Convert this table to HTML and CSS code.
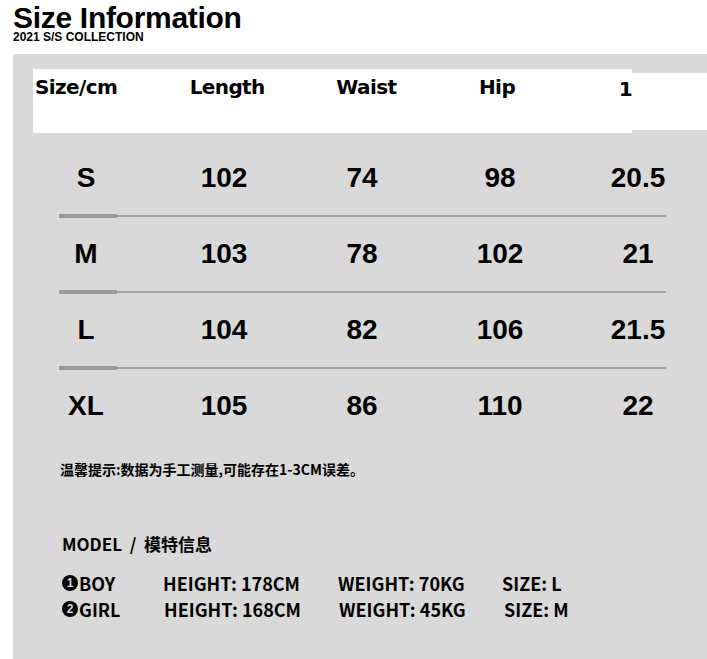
FILE: index.html
```
<!DOCTYPE html>
<html lang="zh-CN">
<head>
<meta charset="utf-8">
<title>Size Information</title>
<link rel="stylesheet" href="styles.css">
</head>
<body>
<header class="top">
  <h1 class="title">Size Information</h1>
  <div class="subtitle">2021 S/S COLLECTION</div>
</header>
<main class="panel">
  <div class="head-row">
    <div class="head-box">
      <span class="h h-size">Size/cm</span>
      <span class="h h-len">Length</span>
      <span class="h h-waist">Waist</span>
      <span class="h h-hip">Hip</span>
      <span class="h h-one">1</span>
    </div>
    <div class="head-ext"></div>
  </div>

  <div class="table">
    <div class="row"><span>S</span><span>102</span><span>74</span><span>98</span><span>20.5</span></div>
    <div class="divider"><i class="thick"></i><i class="thin"></i></div>
    <div class="row"><span>M</span><span>103</span><span>78</span><span>102</span><span>21</span></div>
    <div class="divider"><i class="thick"></i><i class="thin"></i></div>
    <div class="row"><span>L</span><span>104</span><span>82</span><span>106</span><span>21.5</span></div>
    <div class="divider"><i class="thick"></i><i class="thin"></i></div>
    <div class="row"><span>XL</span><span>105</span><span>86</span><span>110</span><span>22</span></div>
  </div>

  <p class="note">温馨提示:数据为手工测量,可能存在1-3CM误差。</p>

  <h2 class="model-title">MODEL&nbsp; / &nbsp;模特信息</h2>
  <div class="models">
    <div class="model"><span class="who"><b class="num">1</b>BOY</span><span>HEIGHT: 178CM</span><span>WEIGHT: 70KG</span><span>SIZE: L</span></div>
    <div class="model model-2"><span class="who"><b class="num">2</b>GIRL</span><span>HEIGHT: 168CM</span><span>WEIGHT: 45KG</span><span>SIZE: M</span></div>
  </div>
</main>
</body>
</html>
```
FILE: styles.css
```
* { box-sizing: border-box; }
html, body { margin: 0; padding: 0; background: #fff; }
body { color: #000; font-family: "Liberation Sans", Arial, sans-serif; height: 659px; overflow: hidden; }

.top { height: 54px; padding: 6px 0 0 13px; }
.title {
  margin: 0; font-size: 30px; line-height: 24px; font-weight: 700;
  letter-spacing: -0.3px;
}
.subtitle {
  margin-top: 2px; font-size: 12px; line-height: 10px; font-weight: 700;
  letter-spacing: 0;
}

.panel {
  margin-left: 13px; height: 605px; background: #d9d9d9;
  padding-top: 15px;
}

.head-row { display: flex; align-items: center; padding-left: 20px; }
.head-box {
  width: 599px; height: 64px; background: #fff;
  display: flex; align-items: flex-start; padding: 6px 0 0 2px;
  font-family: "DejaVu Sans", sans-serif; font-weight: 700; font-size: 20px;
  line-height: 24px; letter-spacing: -0.6px;
}
.head-ext { flex: 1; height: 57px; background: #fff; }
.h { display: block; }
.h-size { width: 155px; }
.h-len { width: 147px; }
.h-waist { width: 143px; }
.h-hip { width: 140px; }
.h-one { padding-top: 2px; }

.table { margin-top: 9px; }
.row {
  display: grid; grid-template-columns: repeat(5, 138px);
  margin-left: 4px; height: 72px; line-height: 72px;
  font-size: 28px; font-weight: 700; text-align: center;
}
.divider { display: flex; align-items: center; height: 4px; margin-left: 46px; width: 607px; }
.divider .thick { display: block; width: 58px; height: 4px; background: #9a9a9a; }
.divider .thin { display: block; flex: 1; height: 2px; background: #a3a3a3; }

.note {
  margin: 17px 0 0 47px; height: 20px; line-height: 20px;
  font-family: "Noto Sans CJK SC", sans-serif; font-weight: 700; font-size: 14px;
}

.model-title {
  margin: 54px 0 0 49px; height: 22px; line-height: 22px;
  font-family: "Noto Sans CJK SC", sans-serif; font-weight: 700; font-size: 17px;
}
.models { margin-top: 15px; padding-left: 49px; }
.model {
  display: grid; grid-template-columns: 101px 175px 164px auto;
  height: 26px; line-height: 26px;
  font-family: "Noto Sans CJK SC", sans-serif; font-weight: 700; font-size: 18px;
}
.model-2 { grid-template-columns: 102px 175px 165px auto; }
.who { display: flex; align-items: center; }
.num {
  display: inline-flex; align-items: center; justify-content: center;
  width: 16px; height: 16px; border-radius: 50%; background: #000; color: #d9d9d9;
  font-size: 12px; line-height: 1; font-weight: 700; margin-right: 1px;
  font-family: "Liberation Sans", Arial, sans-serif;
}
```
